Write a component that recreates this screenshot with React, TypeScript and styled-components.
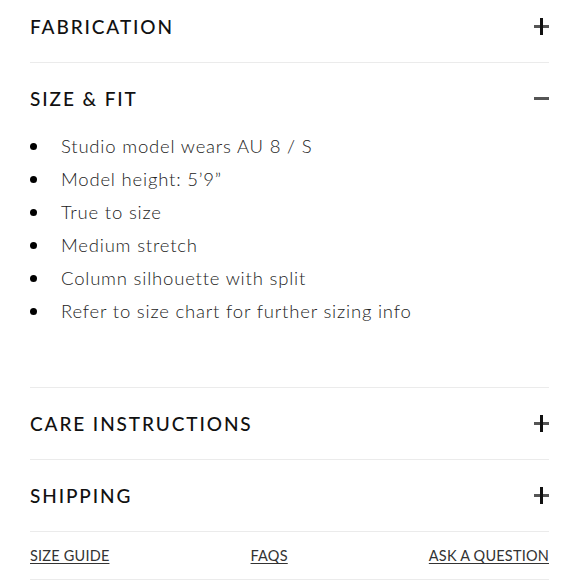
import React from 'react';
import styled, { createGlobalStyle } from 'styled-components';

const GlobalStyle = createGlobalStyle`
  body {
    margin: 0;
    background: #fff;
    font-family: Lato, "Liberation Sans", sans-serif;
    color: #111;
  }
`;

const Page = styled.div`
  width: 519px;
  padding: 0 30px;
  margin-top: -9px;
`;

const Section = styled.section`
  border-bottom: 1.5px solid #ebebeb;
`;

const Header = styled.div`
  height: 71px;
  display: flex;
  align-items: center;
  justify-content: space-between;
`;

const Title = styled.h3`
  margin: 0;
  font-size: 19px;
  font-weight: 500;
  letter-spacing: 1.9px;
  color: #111;
`;

const IconBox = styled.span`
  width: 15px;
  height: 17px;
  display: flex;
  align-items: center;
  justify-content: center;
`;

const Body = styled.ul`
  list-style: none;
  margin: 0;
  padding: 1px 0 66px;
  display: flex;
  flex-direction: column;
  gap: 12px;
`;

const Item = styled.li`
  display: flex;
  align-items: center;
  height: 21px;
  font-size: 18.5px;
  font-weight: 300;
  letter-spacing: 0.8px;
  color: #222;
`;

const Dot = styled.span`
  width: 7px;
  height: 7px;
  border-radius: 50%;
  background: #000;
  margin: 2px 24px 0 0;
  flex: none;
`;

const Footer = styled.nav`
  height: 47px;
  display: flex;
  align-items: center;
  justify-content: space-between;
  border-bottom: 1.5px solid #ebebeb;
`;

const FooterLink = styled.a`
  font-size: 14.5px;
  letter-spacing: 0.2px;
  color: #333;
  text-decoration: underline;
  text-underline-offset: 2px;
  cursor: pointer;
`;

const Plus = () => (
  <svg width="15" height="17" viewBox="0 0 15 17">
    <rect x="0" y="7" width="15" height="3" fill="#555" />
    <rect x="6" y="0" width="3" height="17" fill="#111" />
  </svg>
);

const Minus = () => (
  <svg width="15" height="17" viewBox="0 0 15 17">
    <rect x="0" y="7" width="15" height="3" fill="#555" />
  </svg>
);

const sizeFit = [
  'Studio model wears AU 8 / S',
  'Model height: 5’9”',
  'True to size',
  'Medium stretch',
  'Column silhouette with split',
  'Refer to size chart for further sizing info',
];

const Row: React.FC<{ title: string; open?: boolean; children?: React.ReactNode }> = ({
  title,
  open = false,
  children,
}) => (
  <Section>
    <Header>
      <Title>{title}</Title>
      <IconBox>{open ? <Minus /> : <Plus />}</IconBox>
    </Header>
    {open && children}
  </Section>
);

export default function App() {
  return (
    <>
      <GlobalStyle />
      <Page>
        <Row title="FABRICATION" />
        <Row title="SIZE & FIT" open>
          <Body>
            {sizeFit.map((t) => (
              <Item key={t}>
                <Dot />
                {t}
              </Item>
            ))}
          </Body>
        </Row>
        <Row title="CARE INSTRUCTIONS" />
        <Row title="SHIPPING" />
        <Footer>
          <FooterLink>SIZE GUIDE</FooterLink>
          <FooterLink>FAQS</FooterLink>
          <FooterLink>ASK A QUESTION</FooterLink>
        </Footer>
      </Page>
    </>
  );
}
